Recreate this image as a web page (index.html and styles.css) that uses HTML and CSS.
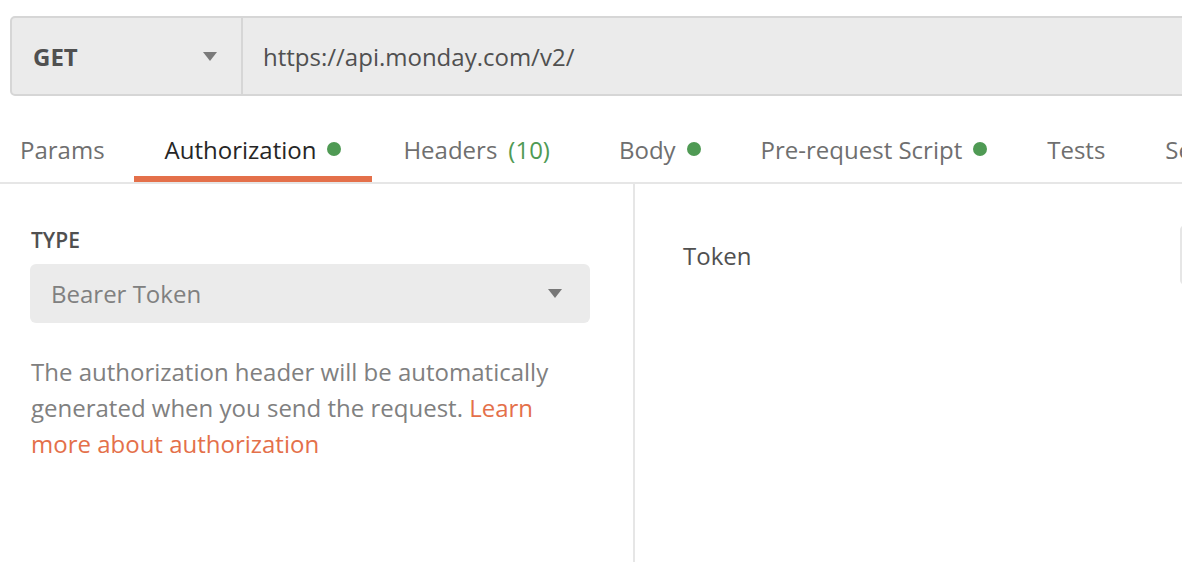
FILE: index.html
```html
<!DOCTYPE html>
<html>
<head>
<meta charset="utf-8">
<link rel="stylesheet" href="styles.css">
</head>
<body>
<div class="page">
  <div class="urlbar">
    <div class="method">
      <span class="method-name">GET</span>
      <span class="caret"></span>
    </div>
    <div class="url">https://api.monday.com/v2/</div>
  </div>

  <div class="tabs">
    <div class="tab first">Params</div>
    <div class="tab active">Authorization <span class="dot"></span></div>
    <div class="tab headers">Headers <span class="count">(10)</span></div>
    <div class="tab">Body <span class="dot"></span></div>
    <div class="tab">Pre-request Script <span class="dot"></span></div>
    <div class="tab">Tests</div>
    <div class="tab">Settings</div>
  </div>

  <div class="panels">
    <div class="left">
      <div class="label">TYPE</div>
      <div class="select">
        <span>Bearer Token</span>
        <span class="caret"></span>
      </div>
      <p class="desc">The authorization header will be automatically generated when you send the request. <a class="link" href="#">Learn more about authorization</a></p>
    </div>
    <div class="right">
      <div class="field-row">
        <div class="field-label">Token</div>
        <div class="field-input"></div>
      </div>
    </div>
  </div>
</div>
</body>
</html>
```

FILE: styles.css
```css
html, body {
  margin: 0;
  padding: 0;
  background: #ffffff;
  overflow: hidden;
}

body {
  font-family: "Open Sans", "Liberation Sans", sans-serif;
  font-size: 24px;
  color: #505050;
  width: 1182px;
  height: 562px;
}

.page {
  display: flex;
  flex-direction: column;
  height: 562px;
  overflow: hidden;
}

.urlbar {
  margin: 16px -20px 0 10px;
  height: 76px;
  display: flex;
  background: #ebebeb;
  border: 2px solid #d6d6d6;
  border-radius: 5px;
  flex-shrink: 0;
}

.method {
  width: 231px;
  border-right: 2px solid #d6d6d6;
  display: flex;
  align-items: center;
  justify-content: space-between;
  padding: 0 24px 0 21px;
  box-sizing: border-box;
}

.method-name {
  font-weight: 700;
  color: #505050;
}

.caret {
  width: 0;
  height: 0;
  border-left: 7.5px solid transparent;
  border-right: 7.5px solid transparent;
  border-top: 9px solid #7a7a7a;
}

.url {
  display: flex;
  align-items: center;
  padding-left: 20px;
  color: #505050;
}

.tabs {
  margin-top: 28px;
  display: flex;
  border-bottom: 2px solid #e6e6e6;
  white-space: nowrap;
  flex-shrink: 0;
}

.tab {
  height: 50px;
  padding: 0 30px 2px 30px;
  display: flex;
  align-items: center;
  gap: 11px;
  color: #6f6f6f;
  border-bottom: 6px solid transparent;
}

.tab.first {
  padding-left: 20px;
  padding-right: 29px;
}

.tab.active {
  padding-left: 31px;
  padding-right: 31px;
  color: #262626;
  border-bottom-color: #e4704a;
}

.tab.headers {
  padding-left: 31px;
  padding-right: 39px;
}

.dot {
  width: 14px;
  height: 14px;
  border-radius: 50%;
  background: #4f9a54;
}

.count {
  color: #4f9a54;
}

.panels {
  flex: 1;
  display: flex;
}

.left {
  width: 635px;
  flex-shrink: 0;
  border-right: 2px solid #e6e6e6;
  padding: 42px 43px 0 30px;
  box-sizing: border-box;
}

.label {
  font-size: 21px;
  font-weight: 600;
  line-height: 28px;
  color: #505050;
  padding-left: 1px;
}

.select {
  margin-top: 10px;
  height: 59px;
  background: #ebebeb;
  border-radius: 6px;
  display: flex;
  align-items: center;
  justify-content: space-between;
  padding: 0 28px 0 21px;
  color: #808080;
}

.select .caret {
  border-top-color: #777777;
}

.desc {
  margin: 31px 0 0 1px;
  max-width: 530px;
  line-height: 36px;
  color: #808080;
}

.link {
  color: #e4704a;
  text-decoration: none;
}

.right {
  flex: 1;
  padding: 41px 0 0 48px;
  min-width: 0;
}

.field-row {
  display: flex;
  align-items: center;
}

.field-label {
  width: 497px;
  flex-shrink: 0;
  color: #505050;
}

.field-input {
  width: 300px;
  height: 60px;
  border: 2px solid #e6e6e6;
  border-radius: 5px;
  box-sizing: border-box;
  flex-shrink: 0;
}
```
